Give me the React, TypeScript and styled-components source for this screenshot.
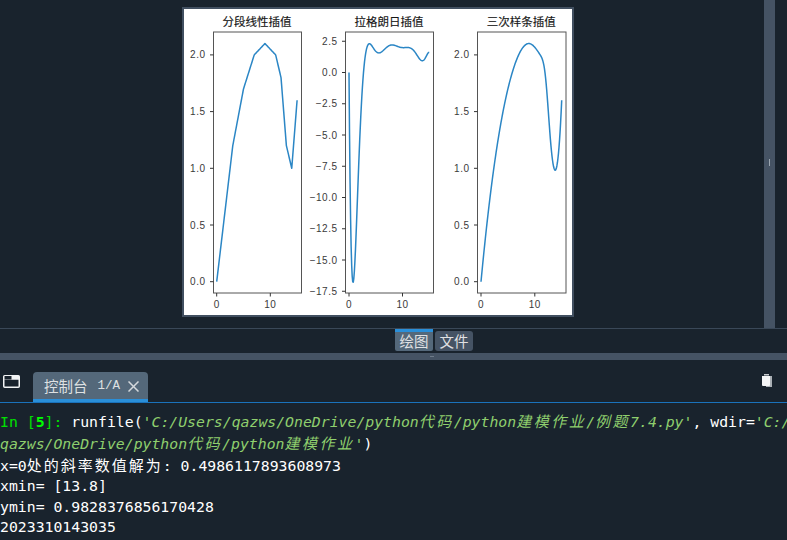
import React from 'react';
import styled, { createGlobalStyle } from 'styled-components';

const GlobalStyle = createGlobalStyle`
  html, body {
    margin: 0;
    padding: 0;
    background: #19232d;
    overflow: hidden;
  }
`;

const cjk = '"Noto Sans CJK SC", "Liberation Sans", sans-serif';
const mono = '"DejaVu Sans Mono", "Noto Sans CJK SC", monospace';

// Styled Components
const Page = styled.div`
  width: 787px;
  height: 540px;
  display: flex;
  flex-direction: column;
  background: #19232d;
  overflow: hidden;
`;

const PlotPane = styled.div`
  height: 328px;
  flex: none;
  display: flex;
  border-bottom: 1px solid #3a4858;
`;

const PlotArea = styled.div`
  width: 764px;
  padding: 7px 0 0 182px;
  box-sizing: border-box;
`;

const Figure = styled.div`
  width: 388px;
  height: 306px;
  border: 2px solid #414f60;
  background: #fff;
`;

const PlotSvg = styled.svg`
  display: block;
`;

const VerticalSplitter = styled.div`
  width: 11px;
  height: 328px;
  background: #455364;
  display: flex;
  justify-content: center;
  padding-top: 159px;
  box-sizing: border-box;
`;

const SplitterGrip = styled.div`
  width: 1px;
  height: 7px;
  background: #9aa5b0;
`;

const PlotTabs = styled.div`
  height: 24px;
  flex: none;
  display: flex;
  align-items: flex-start;
  gap: 2px;
  padding-left: 395px;
`;

const PlotTab = styled.div<{ $active?: boolean }>`
  width: 38px;
  height: ${(p) => (p.$active ? 19 : 20)}px;
  margin-top: ${(p) => (p.$active ? 0 : 2)}px;
  box-sizing: content-box;
  background: ${(p) => (p.$active ? '#54687a' : '#455364')};
  border-top: ${(p) => (p.$active ? '3px solid #2a8fd9' : 'none')};
  border-radius: ${(p) => (p.$active ? '0 0 2px 2px' : '3px')};
  color: #e0e1e3;
  font: 14.5px/${(p) => (p.$active ? 18 : 19)}px ${cjk};
  text-align: center;
`;

const HorizontalSplitter = styled.div`
  height: 7px;
  flex: none;
  background: #455364;
  display: flex;
  justify-content: center;
  align-items: center;
`;

const HorizontalGrip = styled.div`
  width: 4px;
  height: 1px;
  margin-left: 77px;
  background: #6f7c8a;
`;

const ConsoleBar = styled.div`
  height: 43px;
  flex: none;
  box-sizing: border-box;
  padding-top: 12px;
  border-bottom: 1px solid #1a72bb;
  display: flex;
  align-items: flex-end;
  position: relative;
`;

const ToolIcon = styled.svg<{ $left: number; $top: number }>`
  position: absolute;
  left: ${(p) => p.$left}px;
  top: ${(p) => p.$top}px;
`;

const ConsoleTab = styled.div`
  margin-left: 33px;
  width: 115px;
  height: 30px;
  box-sizing: border-box;
  padding: 2px 0 0 11px;
  background: #54687a;
  border-bottom: 3px solid #2a8fd9;
  border-radius: 4px 4px 0 0;
  display: flex;
  align-items: center;
  color: #dfe1e2;
`;

const TabLabel = styled.span`
  font: 14.5px/1 ${cjk};
`;

const TabSuffix = styled.span`
  margin-left: 10px;
  font: 12.5px/1 "Liberation Mono", monospace;
  width: 22px;
`;

const CloseGlyph = styled.svg`
  margin-left: 8px;
`;

const ConsoleBody = styled.div`
  flex: 1;
  overflow: hidden;
  padding-top: 7px;
  font: 14.8px/21px ${mono};
  color: #ffffff;
`;

const Line = styled.div<{ $height?: number }>`
  height: ${(p) => p.$height ?? 21}px;
  line-height: ${(p) => p.$height ?? 21}px;
  white-space: pre;
`;

const Prompt = styled.span`
  color: #00e000;
`;

const PromptNumber = styled.span`
  color: #00ff00;
  font-weight: bold;
`;

const Str = styled.span`
  color: #8fcf6e;
  font-style: italic;
`;

const Han = styled.span`
  font-family: "Noto Sans CJK SC", sans-serif;
  font-size: 15px;
  letter-spacing: 2px;

  ${Str} & {
    letter-spacing: 2.5px;
  }
`;

const ChartTitle = styled.text`
  font: 11.5px ${cjk};
  fill: #161616;
  stroke: #161616;
  stroke-width: 0.15px;
  text-anchor: middle;
`;

const TickLabel = styled.text<{ $anchor: string }>`
  font: 10px "Liberation Sans", sans-serif;
  letter-spacing: 0.5px;
  fill: #3a3a3a;
  text-anchor: ${(p) => p.$anchor};
`;

// interpolation, same data as the plotted script
const xs = [0, 3, 5, 7, 9, 11, 12, 13, 14, 15];
const ys = [0, 1.2, 1.7, 2.0, 2.1, 2.0, 1.8, 1.2, 1.0, 1.6];

const grid = Array.from({ length: 151 }, (_, i) => i / 10);

const lagrange = (x: number) => {
  let sum = 0;
  xs.forEach((xi, i) => {
    let term = ys[i];
    xs.forEach((xj, j) => {
      if (j !== i) term *= (x - xj) / (xi - xj);
    });
    sum += term;
  });
  return sum;
};

const linear = (x: number) => {
  let i = 0;
  while (i < xs.length - 2 && x > xs[i + 1]) i++;
  return ys[i] + ((ys[i + 1] - ys[i]) * (x - xs[i])) / (xs[i + 1] - xs[i]);
};

const solve = (a: number[][], b: number[]) => {
  const n = b.length;
  for (let c = 0; c < n; c++) {
    let p = c;
    for (let r = c + 1; r < n; r++) if (Math.abs(a[r][c]) > Math.abs(a[p][c])) p = r;
    [a[c], a[p]] = [a[p], a[c]];
    [b[c], b[p]] = [b[p], b[c]];
    for (let r = c + 1; r < n; r++) {
      const f = a[r][c] / a[c][c];
      for (let k = c; k < n; k++) a[r][k] -= f * a[c][k];
      b[r] -= f * b[c];
    }
  }
  const out = new Array(n).fill(0);
  for (let r = n - 1; r >= 0; r--) {
    let s = b[r];
    for (let k = r + 1; k < n; k++) s -= a[r][k] * out[k];
    out[r] = s / a[r][r];
  }
  return out;
};

const splineMoments = () => {
  const n = xs.length;
  const h = xs.slice(1).map((x, i) => x - xs[i]);
  const a = xs.map(() => new Array(n).fill(0));
  const b = new Array(n).fill(0);
  // not-a-knot ends
  a[0][0] = -h[1];
  a[0][1] = h[0] + h[1];
  a[0][2] = -h[0];
  a[n - 1][n - 3] = -h[n - 2];
  a[n - 1][n - 2] = h[n - 3] + h[n - 2];
  a[n - 1][n - 1] = -h[n - 3];
  for (let i = 1; i < n - 1; i++) {
    a[i][i - 1] = h[i - 1];
    a[i][i] = 2 * (h[i - 1] + h[i]);
    a[i][i + 1] = h[i];
    b[i] = 6 * ((ys[i + 1] - ys[i]) / h[i] - (ys[i] - ys[i - 1]) / h[i - 1]);
  }
  return solve(a, b);
};

const moments = splineMoments();

const spline = (x: number) => {
  let i = 0;
  while (i < xs.length - 2 && x > xs[i + 1]) i++;
  const h = xs[i + 1] - xs[i];
  const l = xs[i + 1] - x;
  const r = x - xs[i];
  return (
    (moments[i] * l ** 3 + moments[i + 1] * r ** 3) / (6 * h) +
    (ys[i] / h - (moments[i] * h) / 6) * l +
    (ys[i + 1] / h - (moments[i + 1] * h) / 6) * r
  );
};

interface ChartProps {
  title: string;
  left: number;
  right: number;
  x0: number;
  xUnit: number;
  y0: number;
  yUnit: number;
  yTicks: string[];
  points: number[];
}

const TOP = 32;
const BOTTOM = 293;

const Chart: React.FC<ChartProps> = ({ title, left, right, x0, xUnit, y0, yUnit, yTicks, points }) => {
  const d = points
    .map((v, i) => `${i ? 'L' : 'M'}${(x0 + grid[i] * xUnit).toFixed(2)} ${(y0 - v * yUnit).toFixed(2)}`)
    .join(' ');
  return (
    <g>
      <ChartTitle x={(left + right) / 2 - 0.5} y={26}>
        {title}
      </ChartTitle>
      <rect x={left} y={TOP} width={right - left} height={BOTTOM - TOP} fill="#fff" stroke="#555" strokeWidth={1} />
      <path d={d} fill="none" stroke="#2b86c5" strokeWidth={1.5} strokeLinejoin="round" />
      {yTicks.map((t) => {
        const y = y0 - parseFloat(t.replace('−', '-')) * yUnit;
        return (
          <g key={t}>
            <line x1={left - 3.5} x2={left} y1={y} y2={y} stroke="#333" />
            <TickLabel $anchor="end" x={left - 8} y={y + 3.5}>
              {t}
            </TickLabel>
          </g>
        );
      })}
      {[0, 10].map((t) => {
        const x = x0 + t * xUnit;
        return (
          <g key={t}>
            <line x1={x} x2={x} y1={BOTTOM} y2={BOTTOM + 3.5} stroke="#333" />
            <TickLabel $anchor="middle" x={x} y={308}>
              {t}
            </TickLabel>
          </g>
        );
      })}
    </g>
  );
};

const App: React.FC = () => {
  return (
    <Page>
      <GlobalStyle />
      <PlotPane>
        <PlotArea>
          <Figure>
            <PlotSvg width={388} height={306} viewBox="184 9 388 306">
              <Chart
                title="分段线性插值"
                left={213.5}
                right={301.5}
                x0={216.7}
                xUnit={5.36}
                y0={281.7}
                yUnit={113.4}
                yTicks={['0.0', '0.5', '1.0', '1.5', '2.0']}
                points={grid.map(linear)}
              />
              <Chart
                title="拉格朗日插值"
                left={345.5}
                right={433.5}
                x0={349}
                xUnit={5.35}
                y0={72.5}
                yUnit={12.5}
                yTicks={['2.5', '0.0', '−2.5', '−5.0', '−7.5', '−10.0', '−12.5', '−15.0', '−17.5']}
                points={grid.map(lagrange)}
              />
              <Chart
                title="三次样条插值"
                left={477.5}
                right={566}
                x0={481}
                xUnit={5.38}
                y0={281.7}
                yUnit={113.4}
                yTicks={['0.0', '0.5', '1.0', '1.5', '2.0']}
                points={grid.map(spline)}
              />
            </PlotSvg>
          </Figure>
        </PlotArea>
        <VerticalSplitter>
          <SplitterGrip />
        </VerticalSplitter>
      </PlotPane>
      <PlotTabs>
        <PlotTab $active>绘图</PlotTab>
        <PlotTab>文件</PlotTab>
      </PlotTabs>
      <HorizontalSplitter>
        <HorizontalGrip />
      </HorizontalSplitter>
      <ConsoleBar>
        <ToolIcon $left={3} $top={15} width={17} height={13} viewBox="0 0 17 13">
          <rect x="0.75" y="0.75" width="15.5" height="11.5" rx="1" fill="none" stroke="#f2f4f5" strokeWidth="1.5" />
          <rect x="0.75" y="0.75" width="15.5" height="4" fill="#f2f4f5" />
          <rect x="1.5" y="1" width="7" height="3.5" fill="#19232d" />
        </ToolIcon>
        <ConsoleTab>
          <TabLabel>控制台</TabLabel>
          <TabSuffix>1/A</TabSuffix>
          <CloseGlyph width={11} height={11} viewBox="0 0 11 11">
            <path d="M0.5 0.5 L10.5 10.5 M10.5 0.5 L0.5 10.5" stroke="#d5d9dd" strokeWidth="1.5" />
          </CloseGlyph>
        </ConsoleTab>
        <ToolIcon $left={761} $top={13} width={12} height={16} viewBox="0 0 12 16">
          <path d="M3 3 H11 V14 H5 V12 H3 Z" fill="#aab0b5" />
          <rect x="3" y="1" width="5" height="1.5" fill="#c8ccd0" />
          <path d="M1 3 H9 V12 C9 13 8 13 7.5 13 H2.5 C2 13 1 13 1 12 Z" fill="#f4f5f6" />
        </ToolIcon>
      </ConsoleBar>
      <ConsoleBody>
        <Line $height={22}>
          <Prompt>In [</Prompt>
          <PromptNumber>5</PromptNumber>
          <Prompt>]: </Prompt>
          runfile(
          <Str>
            'C:/Users/qazws/OneDrive/python<Han>代码</Han>/python<Han>建模作业</Han>/<Han>例题</Han>7.4.py'
          </Str>
          , wdir=<Str>'C:/</Str>
        </Line>
        <Line $height={22}>
          <Str>
            qazws/OneDrive/python<Han>代码</Han>/python<Han>建模作业</Han>'
          </Str>
          )
        </Line>
        <Line $height={21}>
          x=0<Han>处的斜率数值解为</Han>: 0.4986117893608973
        </Line>
        <Line>xmin= [13.8]</Line>
        <Line>ymin= 0.9828376856170428</Line>
        <Line $height={20}>2023310143035</Line>
      </ConsoleBody>
    </Page>
  );
};

export default App;
